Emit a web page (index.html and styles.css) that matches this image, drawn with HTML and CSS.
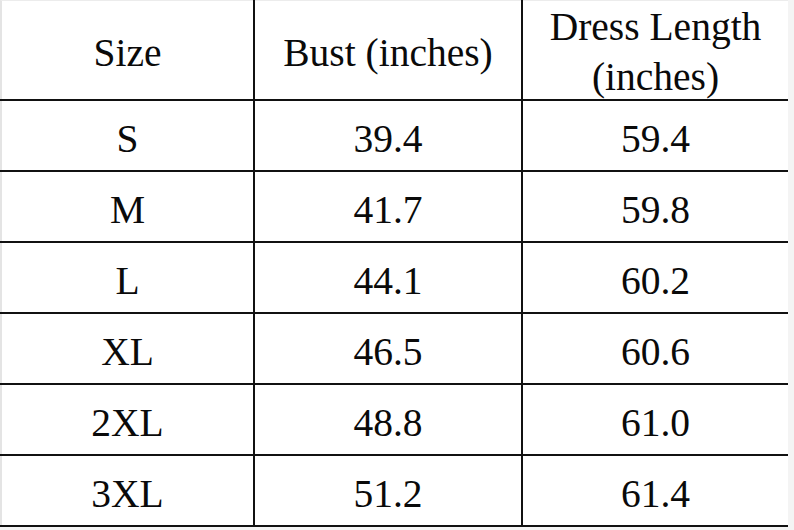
FILE: index.html
```html
<!DOCTYPE html>
<html lang="en">
<head>
<meta charset="utf-8">
<title>Size Chart</title>
<link rel="stylesheet" href="styles.css">
</head>
<body>
<div class="chart">
  <div class="cell head first">Size</div>
  <div class="cell head">Bust (inches)</div>
  <div class="cell head two">Dress Length<br>(inches)</div>

  <div class="cell first">S</div>
  <div class="cell">39.4</div>
  <div class="cell">59.4</div>

  <div class="cell first">M</div>
  <div class="cell">41.7</div>
  <div class="cell">59.8</div>

  <div class="cell first">L</div>
  <div class="cell">44.1</div>
  <div class="cell">60.2</div>

  <div class="cell first">XL</div>
  <div class="cell">46.5</div>
  <div class="cell">60.6</div>

  <div class="cell first">2XL</div>
  <div class="cell">48.8</div>
  <div class="cell">61.0</div>

  <div class="cell first">3XL</div>
  <div class="cell">51.2</div>
  <div class="cell">61.4</div>
</div>
</body>
</html>
```
FILE: styles.css
```css
html, body {
  margin: 0;
  padding: 0;
  background: #f4f4f4;
}

body {
  width: 794px;
  height: 530px;
  overflow: hidden;
  font-family: "Liberation Serif", "Times New Roman", serif;
  color: #0a0a0a;
}

.chart {
  display: grid;
  grid-template-columns: 253px 266px 265px;
  grid-template-rows: 99px repeat(6, 69px);
  gap: 2px;
  width: 786px;
  padding: 0 2px 2px 0;
  background: #111;
  border-top: 0;
}

.cell {
  background: #fff;
  display: flex;
  align-items: center;
  justify-content: center;
  text-align: center;
  font-size: 39.5px;
  line-height: normal;
  padding-top: 7px;
  box-sizing: border-box;
}

.cell.first {
  border-left: 2px solid #e4e4e4;
}

.cell.head {
  padding-top: 6px;
  border-top: 1px solid #ececec;
}

.cell.head.two {
  line-height: 50px;
  padding-top: 3px;
}
```
